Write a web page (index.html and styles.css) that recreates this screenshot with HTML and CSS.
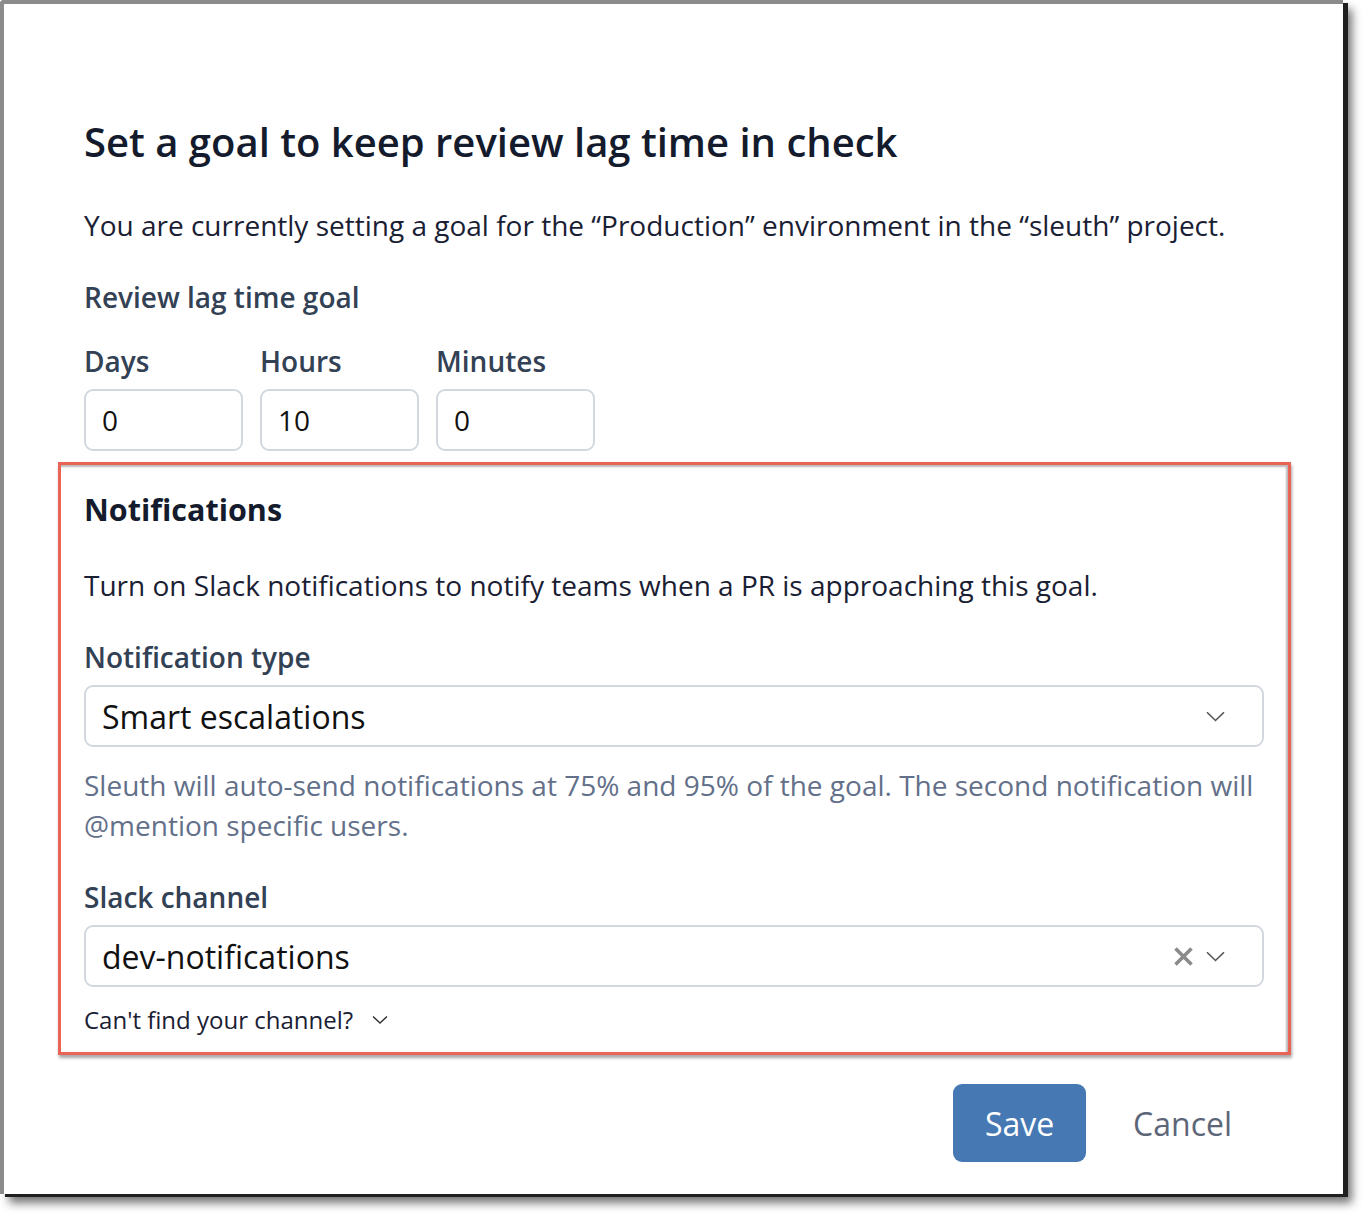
FILE: index.html
```html
<!DOCTYPE html>
<html lang="en">
<head>
<meta charset="utf-8">
<title>Set a goal</title>
<link rel="stylesheet" href="styles.css">
</head>
<body>
<div class="card">
  <h1 class="title">Set a goal to keep review lag time in check</h1>
  <p class="intro">You are currently setting a goal for the “Production” environment in the “sleuth” project.</p>
  <div class="label goal-label">Review lag time goal</div>
  <div class="time-row">
    <div class="time-field">
      <div class="label">Days</div>
      <div class="input">0</div>
    </div>
    <div class="time-field">
      <div class="label">Hours</div>
      <div class="input">10</div>
    </div>
    <div class="time-field">
      <div class="label">Minutes</div>
      <div class="input">0</div>
    </div>
  </div>

  <section class="highlight">
    <h2 class="section-title">Notifications</h2>
    <p class="text">Turn on Slack notifications to notify teams when a PR is approaching this goal.</p>
    <div class="label field-label">Notification type</div>
    <div class="select">
      <span class="select-value">Smart escalations</span>
      <span class="select-icons">
        <svg class="chevron" width="19" height="11" viewBox="0 0 19 11"><path d="M1 1.2 L9.5 9.5 L18 1.2" fill="none" stroke="#555" stroke-width="1.6"/></svg>
      </span>
    </div>
    <p class="help">Sleuth will auto-send notifications at 75% and 95% of the goal. The second notification will @mention specific users.</p>
    <div class="label field-label">Slack channel</div>
    <div class="select">
      <span class="select-value">dev-notifications</span>
      <span class="select-icons">
        <svg class="clear" width="21" height="21" viewBox="0 0 21 21"><path d="M2.5 2.5 L18.5 18.5 M18.5 2.5 L2.5 18.5" fill="none" stroke="#8a8a8a" stroke-width="3.6"/></svg>
        <svg class="chevron" width="19" height="11" viewBox="0 0 19 11"><path d="M1 1.2 L9.5 9.5 L18 1.2" fill="none" stroke="#555" stroke-width="1.6"/></svg>
      </span>
    </div>
    <div class="disclosure">
      <span>Can't find your channel?</span>
      <svg width="16" height="10" viewBox="0 0 16 10"><path d="M1 1.5 L8 8 L15 1.5" fill="none" stroke="#333" stroke-width="1.5"/></svg>
    </div>
  </section>

  <div class="actions">
    <button class="btn btn-primary" type="button">Save</button>
    <button class="btn btn-link" type="button">Cancel</button>
  </div>
</div>
</body>
</html>
```
FILE: styles.css
```css
* { box-sizing: border-box; }
html, body { margin: 0; padding: 0; background: #ffffff; }
body {
  font-family: "Open Sans", "Noto Sans", "Liberation Sans", sans-serif;
  color: #1a2033;
  width: 1368px;
  height: 1218px;
  overflow: hidden;
}
.card {
  width: 1343px;
  height: 1194px;
  background: #ffffff;
  border-top: 4px solid #8b8b8b;
  border-left: 4px solid #8b8b8b;
  border-top-left-radius: 4px;
  box-shadow: 5px 3px 0 #1f1f1f, 9px 9px 10px rgba(0, 0, 0, 0.55);
  padding: 110px 79px 32px 80px;
}
.title {
  margin: 0;
  font-size: 40px;
  line-height: 56px;
  font-weight: 600;
  color: #141b2d;
}
.intro {
  margin: 35px 0 0;
  font-size: 28px;
  line-height: 40px;
}
.label {
  font-size: 28px;
  line-height: 40px;
  font-weight: 600;
  color: #334155;
}
.goal-label { margin-top: 32px; }
.time-row {
  display: flex;
  gap: 17px;
  margin-top: 24px;
}
.time-field { width: 159px; flex: none; }
.input {
  margin-top: 8px;
  height: 62px;
  border: 2px solid #d3d8e0;
  border-radius: 9px;
  padding: 0 16px;
  font-size: 28px;
  line-height: 58px;
  color: #111;
}
.highlight {
  margin: 11px -27px 0 -26px;
  border: 3px solid #ea6455;
  box-shadow: 1px 3px 3px rgba(0, 0, 0, 0.35), inset -2px 2px 2px rgba(0, 0, 0, 0.28);
  padding: 20px 24px 14px 23px;
}
.section-title {
  margin: 0;
  font-size: 30.5px;
  line-height: 48px;
  font-weight: 700;
  color: #141b2d;
}
.text {
  margin: 32px 0 0;
  font-size: 28px;
  line-height: 40px;
}
.field-label { margin-top: 32px; }
.select {
  margin-top: 8px;
  height: 62px;
  border: 2px solid #d3d8e0;
  border-radius: 9px;
  display: flex;
  align-items: center;
  justify-content: space-between;
  padding: 0 37px 0 16px;
}
.select-value {
  font-size: 32px;
  color: #111;
}
.select-icons {
  display: flex;
  align-items: center;
  gap: 12px;
}
.chevron { display: block; }
.clear { display: block; }
.help {
  margin: 18px 0 0;
  font-size: 28px;
  line-height: 40px;
  color: #63708a;
}
.disclosure {
  margin-top: 15px;
  display: flex;
  align-items: center;
  gap: 19px;
  font-size: 24px;
  line-height: 36px;
  color: #1a2033;
}
.disclosure svg { display: block; }
.actions {
  margin-top: 29px;
  display: flex;
  justify-content: flex-end;
  gap: 17px;
}
.btn {
  font-family: inherit;
  font-size: 32px;
  height: 78px;
  border-radius: 9px;
  border: none;
  cursor: pointer;
}
.btn-primary {
  background: #4679b3;
  color: #ffffff;
  width: 133px;
  padding: 0;
}
.btn-link {
  background: transparent;
  color: #5d6679;
  padding: 0 32px 0 30px;
}
```
